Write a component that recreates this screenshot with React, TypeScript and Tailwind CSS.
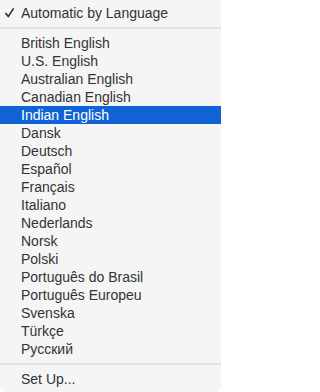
import React from "react";

const langs = [
  "British English",
  "U.S. English",
  "Australian English",
  "Canadian English",
  "Indian English",
  "Dansk",
  "Deutsch",
  "Español",
  "Français",
  "Italiano",
  "Nederlands",
  "Norsk",
  "Polski",
  "Português do Brasil",
  "Português Europeu",
  "Svenska",
  "Türkçe",
  "Русский",
];

function Separator() {
  return (
    <div className="py-[5px]">
      <div className="h-[2px] bg-[#e3e3e3]" />
    </div>
  );
}

export default function App() {
  return (
    <div className="w-[221px] h-[392px] bg-white">
      <div
        className="w-[221px] h-[392px] bg-[#f5f5f5] rounded-b-[5px] pt-[4px] text-[14px] leading-[18px] text-[#333333] antialiased"
        style={{ fontFamily: '"Liberation Sans", Arial, sans-serif' }}
      >
        <div className="relative h-[18px] pl-[21px] flex items-center">
          <svg
            className="absolute left-[5px] top-[4px]"
            width="9"
            height="10"
            viewBox="0 0 9 10"
          >
            <path
              d="M0.9 5.4 L3.3 8.6 L8.2 0.9"
              fill="none"
              stroke="#333333"
              strokeWidth="1.7"
              strokeLinecap="round"
              strokeLinejoin="round"
            />
          </svg>
          <span>Automatic by Language</span>
        </div>
        <Separator />
        {langs.map((l) => (
          <div
            key={l}
            className={
              l === "Indian English"
                ? "h-[18px] pl-[21px] flex items-center bg-[#0f63d5] text-white"
                : "h-[18px] pl-[21px] flex items-center"
            }
          >
            {l}
          </div>
        ))}
        <Separator />
        <div className="h-[18px] pl-[21px] flex items-center">Set Up...</div>
      </div>
    </div>
  );
}
